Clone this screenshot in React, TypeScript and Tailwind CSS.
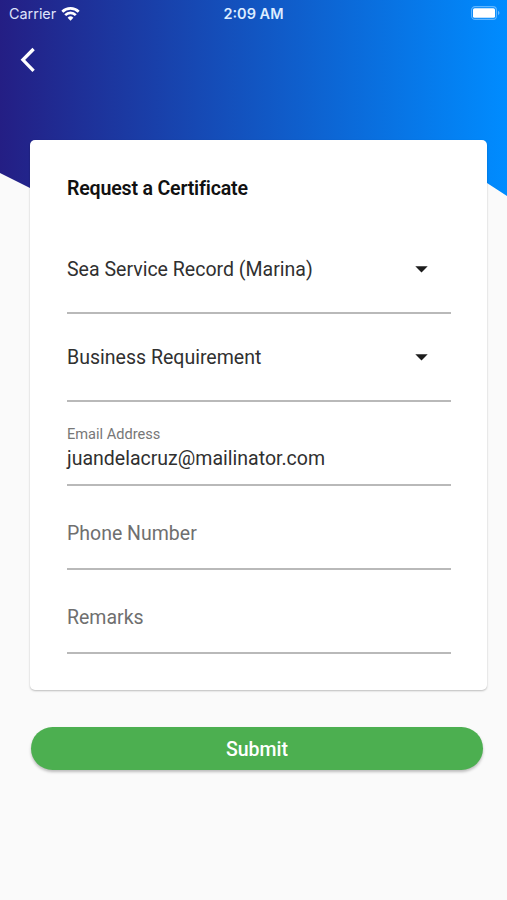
import React from 'react';

function Select({ value }: { value: string }) {
  return (
    <button type="button" className="flex h-[88px] w-full items-center justify-between border-b-2 border-[#b9b9b9] pr-[23px] text-left">
      <span className="whitespace-nowrap pt-[2px] text-[19.55px] leading-6 text-[#303030]">{value}</span>
      <svg width="13" height="7" viewBox="0 0 13 7" className="shrink-0">
        <path d="M.3.3h12.4L6.5 6.5z" fill="#1c1c1c" />
      </svg>
    </button>
  );
}

function Field({ label }: { label: string }) {
  return (
    <div className="h-[84px] border-b-2 border-[#b9b9b9] pt-[36px] text-[19.5px] leading-6 text-[#6f6f6f]">
      {label}
    </div>
  );
}

export default function App() {
  return (
    <div className="h-[900px] w-[507px] overflow-hidden bg-[#fafafa] font-['Roboto',sans-serif]">
      <header className="h-[196px] bg-linear-to-r/srgb from-[#241e84] to-[#008cff] text-white [clip-path:polygon(0_0,100%_0,100%_196px,487px_183px,420px_140px,100px_140px,30px_188px,0_173px)]">
        <div className="grid h-[27px] grid-cols-3 items-center px-[8px] font-['Inter',sans-serif] text-[14.5px] leading-none">
          <div className="flex items-center gap-[5px] pl-px">
            <span className="pt-px text-[14.4px] text-[#dfe3fa]">Carrier</span>
            <svg width="19" height="14" viewBox="0 0 18 14" fill="none" stroke="white" strokeWidth="2.7">
              <path d="M.8 4.8a11.7 11.7 0 0 1 16.4 0M3.7 8.1a7.6 7.6 0 0 1 10.6 0" />
              <path d="M9 13.8 6.1 10.8a4.1 4.1 0 0 1 5.8 0z" fill="white" stroke="none" />
            </svg>
          </div>
          <span className="whitespace-nowrap pt-px text-center font-semibold text-[#dcecff]">2:09 AM</span>
          <svg className="-mr-px -mt-[2px] justify-self-end" width="29" height="14" viewBox="0 0 29 14">
            <rect x=".6" y=".6" width="24.8" height="12.8" rx="3.5" fill="none" stroke="#5fb6ff" strokeWidth="1.1" />
            <rect x="2" y="2.2" width="22" height="9.6" rx="1.6" fill="white" />
            <path d="M27 4.8q3 2.2 0 4.4z" fill="#6bbcff" />
          </svg>
        </div>
        <button type="button" aria-label="Back" className="ml-[20px] mt-[20px] block">
          <svg width="16" height="26" viewBox="0 0 16 26" fill="none" stroke="white" strokeWidth="3.3">
            <path d="M13.6 2 2.9 12.8l10.7 11" />
          </svg>
        </button>
      </header>

      <main className="relative -mt-[56px] pl-[30px] pr-[20px]">
        <section className="h-[550px] rounded-[5px] bg-white pl-[37px] pr-[36px] pt-[37px] shadow-[0_1px_2px_rgba(0,0,0,0.25)]">
          <h1 className="whitespace-nowrap text-[19.6px] font-semibold leading-6 tracking-[-0.2px] text-[#111]">Request a Certificate</h1>
          <div className="mt-[25px]">
            <Select value="Sea Service Record (Marina)" />
            <Select value="Business Requirement" />
            <div className="h-[84px] border-b-2 border-[#b9b9b9] pt-[23px]">
              <div className="text-[14.6px] leading-[18px] text-[#777]">Email Address</div>
              <div className="mt-[4px] whitespace-nowrap text-[19.53px] leading-6 text-[#303030]">juandelacruz@mailinator.com</div>
            </div>
            <Field label="Phone Number" />
            <Field label="Remarks" />
          </div>
        </section>
        <button type="button" className="ml-px mt-[37px] block h-[43px] w-[452px] rounded-full bg-[#4caf50] pt-px text-center text-[19.5px] font-medium leading-[43px] text-white shadow-[0_2px_3px_rgba(0,0,0,0.25)]">
          Submit
        </button>
      </main>
    </div>
  );
}
